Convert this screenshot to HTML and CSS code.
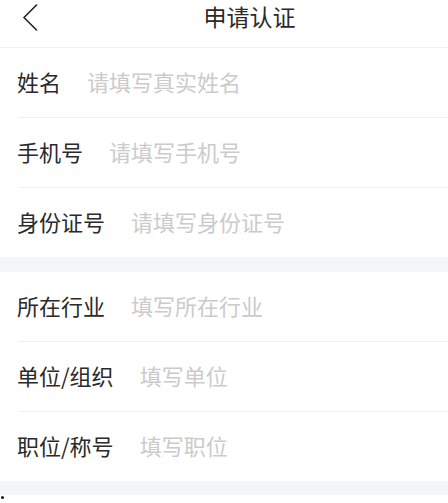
FILE: index.html
```html
<!DOCTYPE html>
<html lang="zh-CN">
<head>
<meta charset="utf-8">
<title>申请认证</title>
<link rel="stylesheet" href="styles.css">
</head>
<body>
<div class="page">
  <header class="header">
    <div class="back">
      <svg width="16" height="27" viewBox="0 0 16 27" fill="none">
        <path d="M14.5 1 L2 13.5 L14.5 26" stroke="#222" stroke-width="1.6" stroke-linecap="round" stroke-linejoin="round"/>
      </svg>
    </div>
    <h1 class="title">申请认证</h1>
  </header>

  <section class="group">
    <div class="field"><span class="label">姓名</span><input class="input" placeholder="请填写真实姓名"></div>
    <div class="field"><span class="label">手机号</span><input class="input" placeholder="请填写手机号"></div>
    <div class="field"><span class="label">身份证号</span><input class="input" placeholder="请填写身份证号"></div>
  </section>
  <div class="gap"></div>
  <section class="group">
    <div class="field"><span class="label">所在行业</span><input class="input" placeholder="填写所在行业"></div>
    <div class="field"><span class="label">单位/组织</span><input class="input" placeholder="填写单位"></div>
    <div class="field"><span class="label">职位/称号</span><input class="input" placeholder="填写职位"></div>
  </section>
  <div class="gap gap-bottom"></div>
  <div class="tail"><span class="dot"></span></div>
</div>
</body>
</html>
```

FILE: styles.css
```css
* { box-sizing: border-box; }
html, body { margin: 0; padding: 0; background: #fff; }
body {
  font-family: "Noto Sans CJK SC", "Noto Sans", sans-serif;
  color: #2a2a2a;
}
.page { width: 448px; }

.header {
  display: flex;
  align-items: flex-start;
  height: 48px;
  border-bottom: 1px solid #f1f1f1;
}
.back {
  width: 51px;
  flex: none;
  padding-left: 22px;
  padding-top: 4px;
  line-height: 0;
}
.title {
  flex: 1;
  margin: 0;
  text-align: center;
  font-size: 23px;
  font-weight: 400;
  line-height: 32px;
  color: #2a2a2a;
}

.group { background: #fff; }
.field {
  display: flex;
  align-items: center;
  height: 70px;
  padding-bottom: 3px;
  margin-left: 18px;
  border-bottom: 1px solid #f1f1f1;
}
.field:last-child { border-bottom: none; height: 69px; }
.label {
  flex: none;
  font-size: 22px;
  line-height: 30px;
  color: #2a2a2a;
  margin-right: 26px;
  margin-left: -1px;
}
.input {
  flex: 1;
  min-width: 0;
  border: none;
  outline: none;
  padding: 0;
  background: transparent;
  font-family: inherit;
  font-size: 22px;
  line-height: 30px;
  color: #2a2a2a;
}
.input::placeholder { color: #cbcbcb; }

.gap { height: 15px; background: #f5f6f8; }
.gap-bottom { height: 14px; }
.tail { padding: 1px 0 0 1px; height: 8px; }
.dot {
  display: block;
  width: 3px;
  height: 3px;
  border-radius: 50%;
  background: #111;
}
```
